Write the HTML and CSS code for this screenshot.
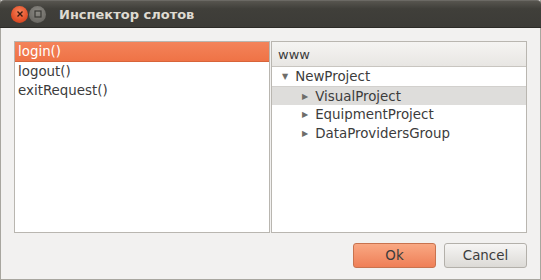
FILE: index.html
```html
<!DOCTYPE html>
<html lang="ru">
<head>
  <meta charset="UTF-8">
  <title>Инспектор слотов</title>
  <link rel="stylesheet" href="styles.css">
</head>
<body>
  <div class="window">
    <!-- Title bar -->
    <div class="titlebar">
      <span class="btn-close">
        <svg width="8" height="8" viewBox="0 0 8 8"><path d="M1.5 1.5 L6.5 6.5 M6.5 1.5 L1.5 6.5" stroke="#3a1a10" stroke-width="1.4"/></svg>
      </span>
      <span class="btn-min">
        <svg width="8" height="8" viewBox="0 0 8 8"><rect x="1" y="1" width="6" height="6" fill="none" stroke="#3a3935" stroke-width="1.2"/></svg>
      </span>
      <span class="title">Инспектор слотов</span>
    </div>

    <div class="content">
      <div class="panes">
        <!-- Slot list -->
        <div class="list">
          <div class="item selected">login()</div>
          <div class="item">logout()</div>
          <div class="item">exitRequest()</div>
        </div>

        <!-- Object tree -->
        <div class="tree">
          <div class="tree-header">www</div>
          <div class="node"><span class="arrow">&#9660;</span>NewProject</div>
          <div class="node child hover"><span class="arrow">&#9654;</span>VisualProject</div>
          <div class="node child"><span class="arrow">&#9654;</span>EquipmentProject</div>
          <div class="node child"><span class="arrow">&#9654;</span>DataProvidersGroup</div>
        </div>
      </div>

      <div class="buttons">
        <button class="btn btn-ok">Ok</button>
        <button class="btn">Cancel</button>
      </div>
    </div>
  </div>
</body>
</html>
```

FILE: styles.css
```css
body {
  margin: 0;
  font-family: "DejaVu Sans", sans-serif;
  font-size: 12px;
  background: #f2f1f0;
}
.window {
  width: 541px;
  height: 280px;
  box-sizing: border-box;
  border: 1px solid #a8a69f;
  border-top: none;
  background: #f2f1f0;
  display: flex;
  flex-direction: column;
}
.titlebar {
  height: 28px;
  box-sizing: border-box;
  margin: 0 -1px;
  background: linear-gradient(#57554f, #403f3a 30%, #3c3b37);
  border-top: 1px solid #6b6964;
  border-bottom: 1px solid #2c2b27;
  border-radius: 4px 4px 0 0;
  display: flex;
  align-items: center;
  padding-left: 11px;
}
.btn-close, .btn-min {
  width: 17px;
  height: 17px;
  border-radius: 50%;
  display: flex;
  align-items: center;
  justify-content: center;
  margin-right: 1px;
}
.btn-close {
  background: radial-gradient(circle at 50% 35%, #f9835a, #e2512a 60%, #c23d1b);
}
.btn-min {
  background: radial-gradient(circle at 50% 35%, #8c8a84, #6d6b66 70%, #5a5954);
}
.title {
  margin-left: 12px;
  color: #dfdbd2;
  font-weight: bold;
  font-size: 13px;
  padding-top: 1px;
}
.content {
  flex: 1;
  display: flex;
  flex-direction: column;
  padding: 13px 13px 0 13px;
}
.panes {
  display: flex;
  gap: 1px;
  height: 192px;
}
.list {
  width: 256px;
  box-sizing: border-box;
  border: 1px solid #b9b6b0;
  background: #fff;
}
.item {
  height: 19px;
  line-height: 19px;
  padding-left: 3px;
  color: #3c3c3c;
  font-size: 13.4px;
}
.item.selected {
  background: linear-gradient(#f3835a, #ef7346);
  color: #fff;
  border-bottom: 1px solid #d8643a;
}
.tree {
  width: 256px;
  box-sizing: border-box;
  border: 1px solid #b9b6b0;
  background: #fff;
}
.tree-header {
  height: 25px;
  line-height: 25px;
  box-sizing: border-box;
  padding-left: 6px;
  background: linear-gradient(#f5f4f2, #e8e6e3);
  border-bottom: 1px solid #c8c5c0;
  color: #3c3c3c;
  font-size: 13px;
}
.node {
  height: 19px;
  line-height: 20px;
  padding-left: 10px;
  color: #3c3c3c;
  font-size: 13.4px;
}
.node.child {
  padding-left: 30px;
}
.node.hover {
  background: #dedddb;
  border-top: 1px solid #d2d0cd;
  height: 18px;
  line-height: 19px;
}
.arrow {
  font-size: 8px;
  color: #6e6d69;
  margin-right: 7px;
  vertical-align: 2px;
}
.buttons {
  display: flex;
  justify-content: flex-end;
  gap: 8px;
  margin-top: 10px;
  padding-right: 0;
}
.btn {
  width: 83px;
  height: 25px;
  border: 1px solid #b3b0aa;
  border-radius: 3px;
  background: linear-gradient(#f6f5f4, #dcdad6);
  color: #3c3c3c;
  font-family: "DejaVu Sans", sans-serif;
  font-size: 13.4px;
  padding: 0;
}
.btn-ok {
  background: linear-gradient(#f9a883, #ef7f57);
  border-color: #c8734f;
}
```
